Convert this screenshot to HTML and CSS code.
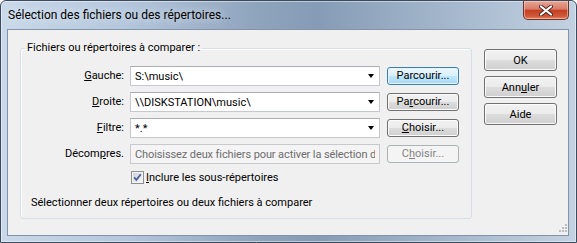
FILE: index.html
```html
<!DOCTYPE html>
<html lang="fr">
<head>
  <meta charset="UTF-8" />
  <title>Sélection des fichiers ou des répertoires</title>
  <link rel="stylesheet" href="styles.css">
</head>
<body>

  <div class="window">
    <!-- Title bar -->
    <div class="titlebar">
      <span class="title">Sélection des fichiers ou des répertoires...</span>
      <button class="close" title="Fermer">
        <svg width="14" height="11" viewBox="0 0 14 11">
          <path d="M2 1.5 L12 9.5 M12 1.5 L2 9.5" stroke="#4a2620" stroke-width="4" stroke-linecap="round"/>
          <path d="M2 1.5 L12 9.5 M12 1.5 L2 9.5" stroke="#fff" stroke-width="2.2" stroke-linecap="round"/>
        </svg>
      </button>
    </div>

    <!-- Client area -->
    <div class="client">
      <fieldset class="group">
        <legend>Fichiers ou répertoires à comparer :</legend>
        <div class="rows">
          <label class="lbl"><u>G</u>auche:</label>
          <div class="combo"><span>S:\music\</span><i class="arrow"></i></div>
          <button class="btn small hot">Parcourir...</button>

          <label class="lbl"><u>D</u>roite:</label>
          <div class="combo"><span>\\DISKSTATION\music\</span><i class="arrow"></i></div>
          <button class="btn small">Pa<u>r</u>courir...</button>

          <label class="lbl"><u>F</u>iltre:</label>
          <div class="combo"><span>*.*</span><i class="arrow"></i></div>
          <button class="btn small"><u>C</u>hoisir...</button>

          <label class="lbl">Décom<u>p</u>res.</label>
          <div class="edit disabled"><span>Choisissez deux fichiers pour activer la sélection du plugin</span></div>
          <button class="btn small" disabled>C<u>h</u>oisir...</button>

          <label class="check">
            <svg width="13" height="13" viewBox="0 0 13 13">
              <defs>
                <linearGradient id="cb" x1="0" y1="0" x2="1" y2="1">
                  <stop offset="0" stop-color="#cdd1d7"/>
                  <stop offset="1" stop-color="#f7f7f8"/>
                </linearGradient>
              </defs>
              <rect x="0.5" y="0.5" width="12" height="12" fill="#f4f4f4" stroke="#8e8f8f"/>
              <rect x="2" y="2" width="9" height="9" fill="url(#cb)"/>
              <path d="M3.2 6.3 L5.4 8.8 L9.8 3.2" fill="none" stroke="#4a5e9c" stroke-width="1.8"/>
            </svg>
            <span><u>I</u>nclure les sous-répertoires</span>
          </label>
        </div>
        <p class="hint">Sélectionner deux répertoires ou deux fichiers à comparer</p>
      </fieldset>

      <div class="actions">
        <button class="btn">OK</button>
        <button class="btn">Ann<u>u</u>ler</button>
        <button class="btn">Aide</button>
      </div>

      <!-- resize grip in the corner -->
      <svg class="grip" width="10" height="10" viewBox="0 0 10 10">
        <g fill="#b9bdc3">
          <rect x="8" y="0" width="2" height="2"/>
          <rect x="5" y="3" width="2" height="2"/><rect x="8" y="3" width="2" height="2"/>
          <rect x="2" y="6" width="2" height="2"/><rect x="5" y="6" width="2" height="2"/><rect x="8" y="6" width="2" height="2"/>
        </g>
      </svg>
    </div>
  </div>

</body>
</html>
```

FILE: styles.css
```css
body {
  margin: 0;
  background: #fff;
  font-family: "Segoe UI", Roboto, "Liberation Sans", sans-serif;
  font-size: 11px;
  color: #000;
}

.window {
  width: 577px;
  height: 243px;
  box-sizing: border-box;
  border: 1px solid #3b4b5d;
  border-radius: 6px 6px 0 0;
  background: linear-gradient(to right, #c9d9ea 0%, #b3c6dc 22%, #8ea3bc 45%, #869cb6 55%, #a4b7cc 78%, #c3d2e2 100%);
  box-shadow: inset 0 0 0 1px rgba(255, 255, 255, 0.45);
}

/* title bar */
.titlebar {
  height: 28px;
  display: flex;
  align-items: flex-start;
  padding-left: 7px;
}

.title {
  font-size: 12px;
  line-height: 28px;
  color: #000;
  text-shadow: 0 0 8px rgba(255, 255, 255, 0.9);
}

.close {
  margin-left: auto;
  margin-right: 7px;
  width: 46px;
  height: 19px;
  padding: 0;
  border: 1px solid #6e3327;
  border-top: none;
  border-radius: 0 0 5px 5px;
  background: linear-gradient(#e7a797 0%, #d87b66 45%, #c63f25 52%, #d0593a 85%, #e18a63 100%);
  box-shadow: inset 0 0 0 1px rgba(255, 220, 210, 0.5);
  display: flex;
  align-items: center;
  justify-content: center;
}

/* client area */
.client {
  position: relative;
  height: 207px;
  box-sizing: border-box;
  margin: 0 7px 0 6px;
  border: 1px solid #8493a5;
  background: #f0f0f0;
  display: flex;
  align-items: flex-start;
  padding: 11px 11px 0 12px;
}

.group {
  margin: 0;
  width: 452px;
  box-sizing: border-box;
  border: 1px solid #d5dfe5;
  border-radius: 3px;
  padding: 11px 12px 8px 0;
  min-width: 0;
  box-shadow: inset 1px 1px 0 #fff;
}

.group legend {
  margin-left: 4px;
  padding: 0 2px;
  line-height: 14px;
}

.rows {
  display: grid;
  grid-template-columns: 103px 251px 72px;
  column-gap: 6px;
  row-gap: 6px;
  align-items: center;
}

.lbl {
  text-align: right;
  line-height: 20px;
}

.combo, .edit {
  width: 250px;
  height: 20px;
  box-sizing: border-box;
  border: 1px solid #c5c8cd;
  border-top-color: #abadb3;
  background: #fff;
  display: flex;
  align-items: center;
  padding: 0 4px;
  overflow: hidden;
  white-space: nowrap;
}

.combo span, .edit span {
  flex: 1;
  overflow: hidden;
}

.arrow {
  width: 0;
  height: 0;
  border-top: 4px solid #000;
  border-left: 3.5px solid transparent;
  border-right: 3.5px solid transparent;
  margin-right: 1px;
}

.edit.disabled {
  background: #f4f4f4;
  border-color: #c8c9ca;
  color: #6d6d6d;
  letter-spacing: -0.1px;
}

.btn {
  font-family: inherit;
  font-size: 11px;
  color: #000;
  width: 73px;
  height: 22px;
  padding: 0;
  border: 1px solid #707070;
  border-radius: 3px;
  background: linear-gradient(#f2f2f2 0%, #ebebeb 50%, #dddddd 51%, #cfcfcf 100%);
  box-shadow: inset 0 0 0 1px #fbfbfb;
}

.btn.small {
  width: 72px;
  height: 18px;
  line-height: 14px;
}

.btn.hot {
  border-color: #3c7fb1;
  background: linear-gradient(#eaf6fd 0%, #d9f0fc 50%, #bee6fd 51%, #a7d9f5 100%);
  box-shadow: inset 0 0 0 1px #e6f5fd;
}

.btn:disabled {
  color: #838383;
  border-color: #adb2b5;
  background: #f4f4f4;
  box-shadow: none;
}

.check {
  grid-column: 2 / span 2;
  display: flex;
  align-items: center;
  gap: 2px;
  margin-left: 1px;
  line-height: 15px;
}

.hint {
  margin: 11px 0 0 10px;
  line-height: 14px;
}

.actions {
  margin: 8px 0 0 12px;
  display: flex;
  flex-direction: column;
  gap: 5px;
}

.grip {
  position: absolute;
  right: 1px;
  bottom: 1px;
}
```
